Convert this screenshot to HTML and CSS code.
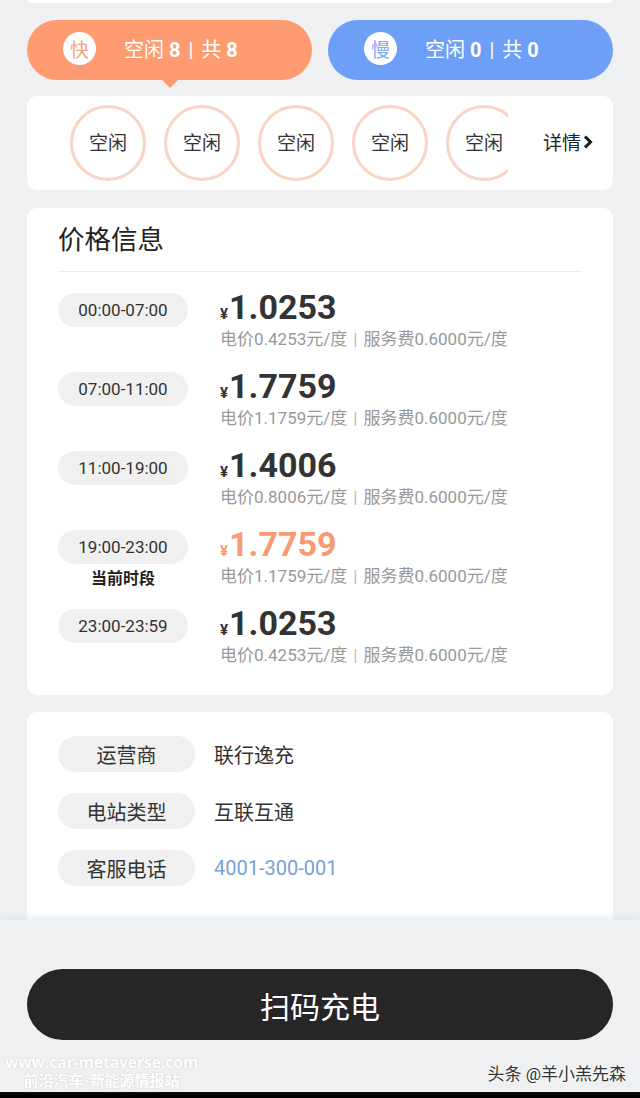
FILE: index.html
```html
<!DOCTYPE html>
<html lang="zh-CN">
<head>
    <meta charset="UTF-8">
    <meta name="viewport" content="width=device-width, initial-scale=1.0">
    <title>充电站详情</title>
    <link rel="stylesheet" href="styles.css">
</head>
<body>
    <div class="page">
        <div class="scroll-area">
            <div class="card top-stub"></div>

            <div class="tabs">
                <div class="tab tab-fast active">
                    <span class="tab-badge">快</span>
                    <span class="tab-text">空闲 <b>8</b><i class="sep">|</i>共 <b>8</b></span>
                </div>
                <div class="tab tab-slow">
                    <span class="tab-badge">慢</span>
                    <span class="tab-text">空闲 <b>0</b><i class="sep">|</i>共 <b>0</b></span>
                </div>
            </div>

            <div class="card status-card">
                <div class="status-list">
                    <div class="status-dot">空闲</div>
                    <div class="status-dot">空闲</div>
                    <div class="status-dot">空闲</div>
                    <div class="status-dot">空闲</div>
                    <div class="status-dot">空闲</div>
                </div>
                <div class="status-more">
                    <span>详情</span>
                    <svg width="12" height="16" viewBox="0 0 12 16"><path d="M3 2.5 L8.5 8 L3 13.5" fill="none" stroke="#1a1a1a" stroke-width="3"/></svg>
                </div>
            </div>

            <div class="card price-card">
                <h2 class="card-title">价格信息</h2>
                <div class="price-list">
                    <div class="price-row">
                        <div class="period">
                            <span class="time-pill">00:00-07:00</span>
                        </div>
                        <div class="price-info">
                            <div class="price"><span class="yen">¥</span>1.0253</div>
                            <div class="price-detail">电价0.4253元/度<i class="sep">|</i>服务费0.6000元/度</div>
                        </div>
                    </div>
                    <div class="price-row">
                        <div class="period">
                            <span class="time-pill">07:00-11:00</span>
                        </div>
                        <div class="price-info">
                            <div class="price"><span class="yen">¥</span>1.7759</div>
                            <div class="price-detail">电价1.1759元/度<i class="sep">|</i>服务费0.6000元/度</div>
                        </div>
                    </div>
                    <div class="price-row">
                        <div class="period">
                            <span class="time-pill">11:00-19:00</span>
                        </div>
                        <div class="price-info">
                            <div class="price"><span class="yen">¥</span>1.4006</div>
                            <div class="price-detail">电价0.8006元/度<i class="sep">|</i>服务费0.6000元/度</div>
                        </div>
                    </div>
                    <div class="price-row current">
                        <div class="period">
                            <span class="time-pill">19:00-23:00</span>
                            <span class="period-note">当前时段</span>
                        </div>
                        <div class="price-info">
                            <div class="price"><span class="yen">¥</span>1.7759</div>
                            <div class="price-detail">电价1.1759元/度<i class="sep">|</i>服务费0.6000元/度</div>
                        </div>
                    </div>
                    <div class="price-row">
                        <div class="period">
                            <span class="time-pill">23:00-23:59</span>
                        </div>
                        <div class="price-info">
                            <div class="price"><span class="yen">¥</span>1.0253</div>
                            <div class="price-detail">电价0.4253元/度<i class="sep">|</i>服务费0.6000元/度</div>
                        </div>
                    </div>
                </div>
            </div>

            <div class="card info-card">
                <div class="info-row">
                    <span class="info-label">运营商</span>
                    <span class="info-value">联行逸充</span>
                </div>
                <div class="info-row">
                    <span class="info-label">电站类型</span>
                    <span class="info-value">互联互通</span>
                </div>
                <div class="info-row">
                    <span class="info-label">客服电话</span>
                    <span class="info-value phone">4001-300-001</span>
                </div>
            </div>
        </div>

        <div class="bottom-bar">
            <button class="scan-btn" type="button">扫码充电</button>
            <div class="watermark-left">
                <span class="wm-url">www.car-metaverse.com</span>
                <span class="wm-name">前沿汽车-新能源情报站</span>
            </div>
            <div class="watermark-right">头条 @羊小羔先森</div>
        </div>
        <div class="black-strip"></div>
    </div>
</body>
</html>
```

FILE: styles.css
```css
body {
    margin: 0;
    background: #eff0f2;
    font-family: Roboto, "Noto Sans CJK SC", sans-serif;
    color: #333;
}

.page {
    display: flex;
    flex-direction: column;
    height: 100vh;
    overflow: hidden;
}

.scroll-area {
    flex: 1;
    overflow: hidden;
    padding: 0 27px;
}

.card {
    background: #fff;
    border-radius: 10px;
}

.top-stub {
    height: 3px;
    border-radius: 0 0 10px 10px;
}

i.sep {
    font-style: normal;
}

/* fast / slow tabs */
.tabs {
    display: grid;
    grid-template-columns: 1fr 1fr;
    gap: 16px;
    margin-top: 17px;
}

.tab {
    position: relative;
    height: 60px;
    border-radius: 30px;
    display: flex;
    align-items: center;
    padding-left: 36px;
    padding-bottom: 4px;
    box-sizing: border-box;
    color: #fff;
}

.tab-fast {
    background: #ff9b71;
}

.tab-slow {
    background: #6e9ff6;
}

.tab.active::after {
    content: "";
    position: absolute;
    left: 135px;
    bottom: -8px;
    border-left: 8px solid transparent;
    border-right: 8px solid transparent;
    border-top: 8px solid #ff9b71;
}

.tab-badge {
    width: 33px;
    height: 33px;
    border-radius: 50%;
    background: #fff;
    display: flex;
    align-items: center;
    justify-content: center;
    font-size: 19px;
}

.tab-fast .tab-badge {
    color: #f5a47f;
}

.tab-slow .tab-badge {
    color: #7fa8f2;
}

.tab-text {
    margin-left: 28px;
    font-size: 20px;
}

.tab-text b {
    font-weight: 700;
}

.tab-text .sep {
    margin: 0 8px;
}

/* status circles */
.status-card {
    margin-top: 16px;
    height: 94px;
    display: flex;
    align-items: center;
    padding-left: 43px;
}

.status-list {
    display: flex;
    gap: 18px;
    width: 438px;
    overflow: hidden;
    flex-shrink: 0;
}

.status-dot {
    flex-shrink: 0;
    width: 76px;
    height: 76px;
    padding-bottom: 3px;
    box-sizing: border-box;
    border: 3px solid #f8d4c4;
    border-radius: 50%;
    display: flex;
    align-items: center;
    justify-content: center;
    font-size: 19px;
    color: #333;
}

.status-more {
    flex-shrink: 0;
    white-space: nowrap;
    margin-left: 35px;
    padding-bottom: 3px;
    font-size: 19px;
    color: #222;
    display: flex;
    align-items: center;
    gap: 1px;
}

/* price card */
.price-card {
    margin-top: 18px;
    height: 487px;
    box-sizing: border-box;
    padding: 0 31px;
}

.card-title {
    margin: 0;
    padding-top: 10px;
    height: 53px;
    border-bottom: 1px solid #ececec;
    font-size: 26.5px;
    font-weight: 400;
    color: #222;
}

.price-list {
    display: flex;
    flex-direction: column;
    gap: 19px;
    padding-top: 17px;
}

.price-row {
    display: flex;
    gap: 32px;
    height: 60px;
}

.period {
    width: 130px;
    display: flex;
    flex-direction: column;
    align-items: center;
    padding-top: 4px;
}

.time-pill {
    flex-shrink: 0;
    width: 130px;
    height: 34px;
    border-radius: 17px;
    background: #f0f0f0;
    display: flex;
    align-items: center;
    justify-content: center;
    font-size: 17px;
    color: #333;
}

.period-note {
    margin-top: 4px;
    font-size: 16px;
    line-height: 22px;
    font-weight: 700;
    color: #222;
}

.price {
    font-size: 34px;
    font-weight: 700;
    line-height: 36px;
    height: 36px;
    color: #333;
}

.yen {
    font-size: 15px;
    line-height: 1;
    margin-right: 1px;
}

.current .price {
    color: #f99a73;
}

.price-detail {
    margin-top: 3px;
    font-size: 17px;
    line-height: 22px;
    color: #999;
}

.price-detail .sep {
    margin: 0 6px;
    color: #bbb;
}

/* operator info */
.info-card {
    margin-top: 17px;
    padding: 24px 31px 80px;
    display: flex;
    flex-direction: column;
    gap: 21px;
}

.info-row {
    display: flex;
    align-items: center;
}

.info-label {
    width: 137px;
    height: 36px;
    border-radius: 18px;
    background: #f0f0f0;
    display: flex;
    align-items: center;
    justify-content: center;
    font-size: 20px;
    color: #333;
}

.info-value {
    margin-left: 19px;
    font-size: 20px;
    color: #333;
}

.info-value.phone {
    color: #7aa0d8;
}

/* bottom bar */
.bottom-bar {
    position: relative;
    height: 172px;
    flex-shrink: 0;
    background: #eff0f2;
    box-shadow: 0 -3px 6px rgba(210, 220, 235, 0.5);
    padding: 49px 27px 0;
    box-sizing: border-box;
}

.scan-btn {
    width: 100%;
    height: 71px;
    border: none;
    border-radius: 36px;
    background: #262528;
    color: #fff;
    font-family: "Noto Sans CJK SC", sans-serif;
    font-size: 30px;
}

.watermark-left {
    position: absolute;
    left: 5px;
    bottom: 2px;
    display: flex;
    flex-direction: column;
    align-items: center;
    color: #fff;
    font-weight: 700;
    text-shadow: 0 0 2px rgba(0, 0, 0, 0.15);
}

.wm-url {
    font-family: "Open Sans", sans-serif;
    font-size: 15.5px;
    line-height: 19px;
}

.wm-name {
    font-size: 15px;
    line-height: 18px;
}

.watermark-right {
    position: absolute;
    right: 14px;
    bottom: 7px;
    font-size: 17px;
    color: #333;
    text-shadow: 0 0 2px #fff, 0 0 2px #fff;
}

.black-strip {
    height: 6px;
    flex-shrink: 0;
    background: #000;
}
```
